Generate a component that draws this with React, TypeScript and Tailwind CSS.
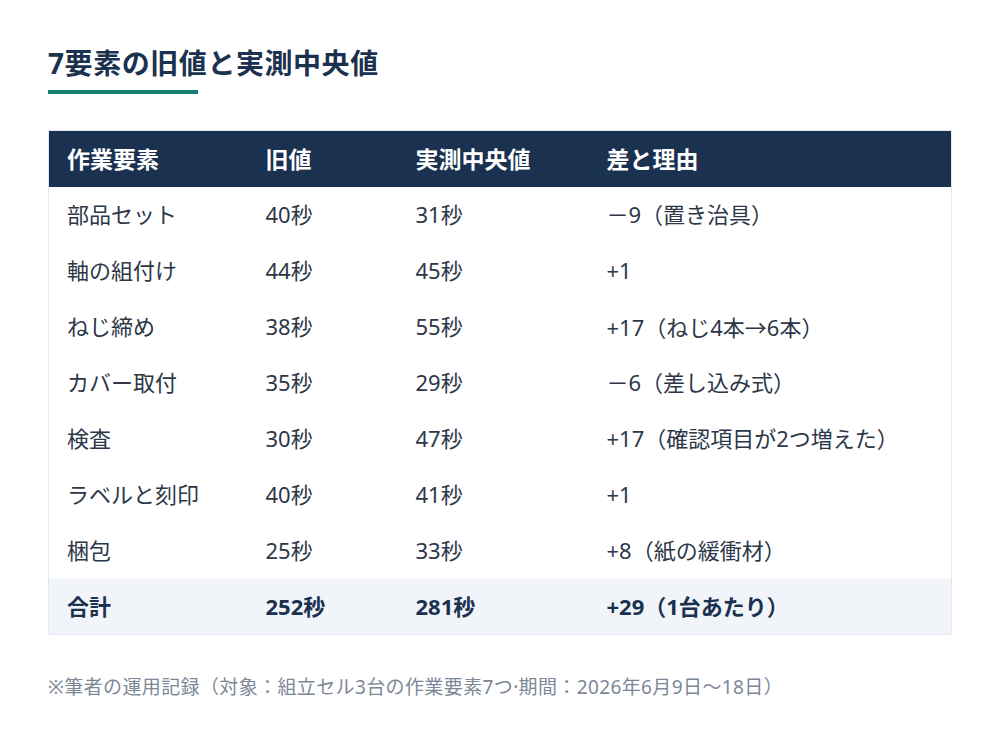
import type { JSX, ReactNode } from "react";

/* ── Data ───────────────────────────────────────── */
interface Row {
  name: string;
  oldValue: string;
  measured: string;
  diff: ReactNode;
}

const cjk = { fontFamily: '"Noto Sans CJK JP", sans-serif' };

const rows: Row[] = [
  { name: "部品セット", oldValue: "40秒", measured: "31秒", diff: "－9（置き治具）" },
  { name: "軸の組付け", oldValue: "44秒", measured: "45秒", diff: "+1" },
  {
    name: "ねじ締め",
    oldValue: "38秒",
    measured: "55秒",
    diff: (
      <>
        +17（ねじ4本<span style={cjk}>→</span>6本）
      </>
    ),
  },
  { name: "カバー取付", oldValue: "35秒", measured: "29秒", diff: "－6（差し込み式）" },
  { name: "検査", oldValue: "30秒", measured: "47秒", diff: "+17（確認項目が2つ増えた）" },
  { name: "ラベルと刻印", oldValue: "40秒", measured: "41秒", diff: "+1" },
  { name: "梱包", oldValue: "25秒", measured: "33秒", diff: "+8（紙の緩衝材）" },
];

const font = { fontFamily: '"Noto Sans", "Noto Sans CJK JP", sans-serif' };

/* ── Component ──────────────────────────────────── */
export default function App(): JSX.Element {
  return (
    <div className="min-h-screen bg-white px-12 pt-[44px]" style={font}>
      <h1 className="text-[28px] font-bold leading-[38px] tracking-[0.02em] text-[#1b3150]">
        7要素の旧値と実測中央値
      </h1>
      <div className="mt-[8px] h-[4px] w-[150px] bg-[#178072]" />

      <table className="mt-[36px] w-[904px] table-fixed border-collapse border border-[#e2e8f0] text-[22px]">
        <colgroup>
          <col className="w-[199px]" />
          <col className="w-[150px]" />
          <col className="w-[191px]" />
          <col />
        </colgroup>
        <thead>
          <tr className="h-[56px] bg-[#1a3150] text-left text-[23px] text-white">
            <th className="px-[18px] font-bold">作業要素</th>
            <th className="px-[18px] font-bold">旧値</th>
            <th className="px-[18px] font-bold">実測中央値</th>
            <th className="px-[18px] font-bold">差と理由</th>
          </tr>
        </thead>
        <tbody className="text-[#2d3748]">
          {rows.map((r) => (
            <tr key={r.name} className="h-[56px]">
              <td className="px-[18px]">{r.name}</td>
              <td className="px-[18px]">{r.oldValue}</td>
              <td className="px-[18px]">{r.measured}</td>
              <td className="whitespace-nowrap px-[18px]">{r.diff}</td>
            </tr>
          ))}
          <tr className="h-[56px] bg-[#f1f5f9] font-bold text-[#1a3150]">
            <td className="px-[18px]">合計</td>
            <td className="px-[18px]">252秒</td>
            <td className="px-[18px]">281秒</td>
            <td className="px-[18px]">+29（1台あたり）</td>
          </tr>
        </tbody>
      </table>

      <p className="mt-[38px] text-[19px] tracking-[0.02em] text-[#7d8797]">
        ※筆者の運用記録（対象：組立セル3台の作業要素7つ·期間：2026年6月9日〜18日）
      </p>
    </div>
  );
}
